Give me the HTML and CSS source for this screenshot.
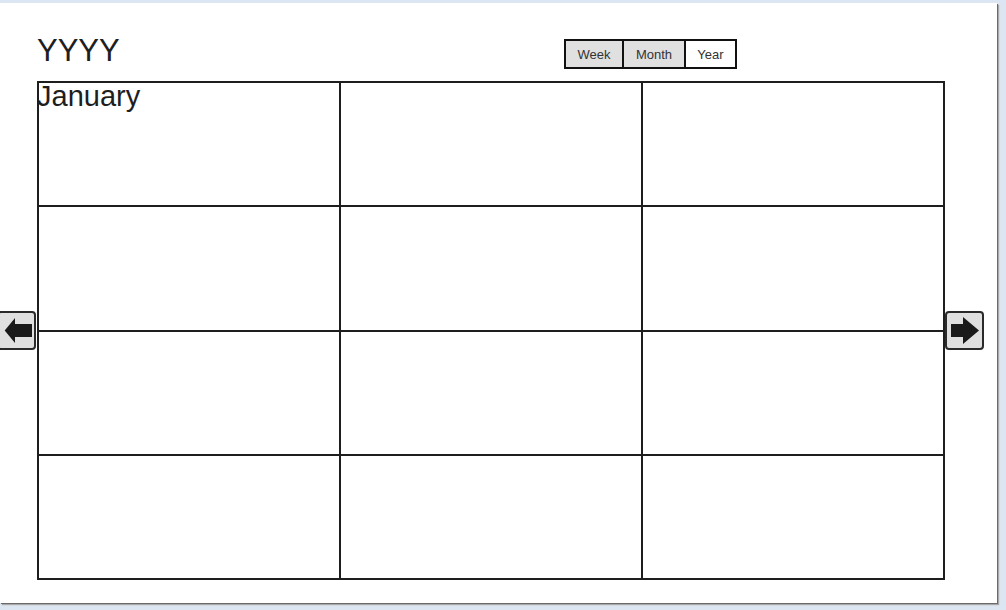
FILE: index.html
```html
<!DOCTYPE html>
<html>
<head>
<meta charset="utf-8">
<link rel="stylesheet" href="styles.css">
</head>
<body>
<div class="panel">
  <div class="header">
    <div class="year-title">YYYY</div>
    <div class="views">
      <div class="view view-week">Week</div>
      <div class="view view-month">Month</div>
      <div class="view view-year">Year</div>
    </div>
  </div>
  <div class="main">
    <div class="nav nav-prev">
      <svg width="35" height="35" viewBox="0 0 35 35"><polygon points="33,11 16,11 16,5 5.7,17.5 16,30 16,24 33,24" fill="#1a1a1a"/></svg>
    </div>
    <div class="months">
      <div class="cell"><span class="month-name">January</span></div>
      <div class="cell"></div>
      <div class="cell"></div>
      <div class="cell"></div>
      <div class="cell"></div>
      <div class="cell"></div>
      <div class="cell"></div>
      <div class="cell"></div>
      <div class="cell"></div>
      <div class="cell"></div>
      <div class="cell"></div>
      <div class="cell"></div>
    </div>
    <div class="nav nav-next">
      <svg width="35" height="35" viewBox="0 0 35 35"><polygon points="4,11 16,11 16,4 32,17.5 16,31 16,24 4,24" fill="#1a1a1a"/></svg>
    </div>
  </div>
</div>
</body>
</html>
```
FILE: styles.css
```css
html, body {
  margin: 0;
  padding: 0;
}
body {
  background: #dce6f2;
  width: 1006px;
  height: 610px;
  overflow: hidden;
  font-family: "Liberation Sans", Arial, sans-serif;
  color: #1e1e1e;
}
.panel {
  margin-top: 3px;
  width: 997px;
  height: 600px;
  background: #ffffff;
  box-shadow: 1px 1px 0 #6a6a6a, 2px 2px 1px #a8a8a8;
  overflow: hidden;
}
.header {
  display: flex;
  align-items: flex-start;
  height: 78px;
  padding-left: 37px;
  box-sizing: border-box;
}
.year-title {
  width: 527px;
  margin-top: 31px;
  font-size: 31px;
  line-height: 34px;
}
.views {
  display: flex;
  margin-top: 36px;
  border: 2px solid #111;
  height: 26px;
}
.view {
  font-size: 13px;
  color: #333;
  line-height: 27px;
  text-align: center;
  background: #e0e0e0;
}
.view-week { width: 56px; border-right: 2px solid #111; }
.view-month { width: 60px; border-right: 2px solid #111; }
.view-year { width: 49px; background: #ffffff; }
.main {
  display: flex;
  align-items: center;
}
.nav {
  width: 35px;
  height: 35px;
  border: 2px solid #2a2a2a;
  border-radius: 4px;
  background: #e0e0e0;
  flex: none;
}
.nav svg { display: block; }
.nav-prev {
  margin-left: -3px;
  margin-right: 1px;
}
.months {
  display: grid;
  grid-template-columns: repeat(3, 300px);
  grid-template-rows: repeat(4, 1fr);
  gap: 2px;
  padding: 2px;
  width: 908px;
  height: 499px;
  box-sizing: border-box;
  background: #1e1e1e;
  flex: none;
}
.cell {
  background: #ffffff;
}
.month-name {
  display: block;
  margin: -1px 0 0 -2px;
  font-size: 29px;
  line-height: 29px;
}
```
